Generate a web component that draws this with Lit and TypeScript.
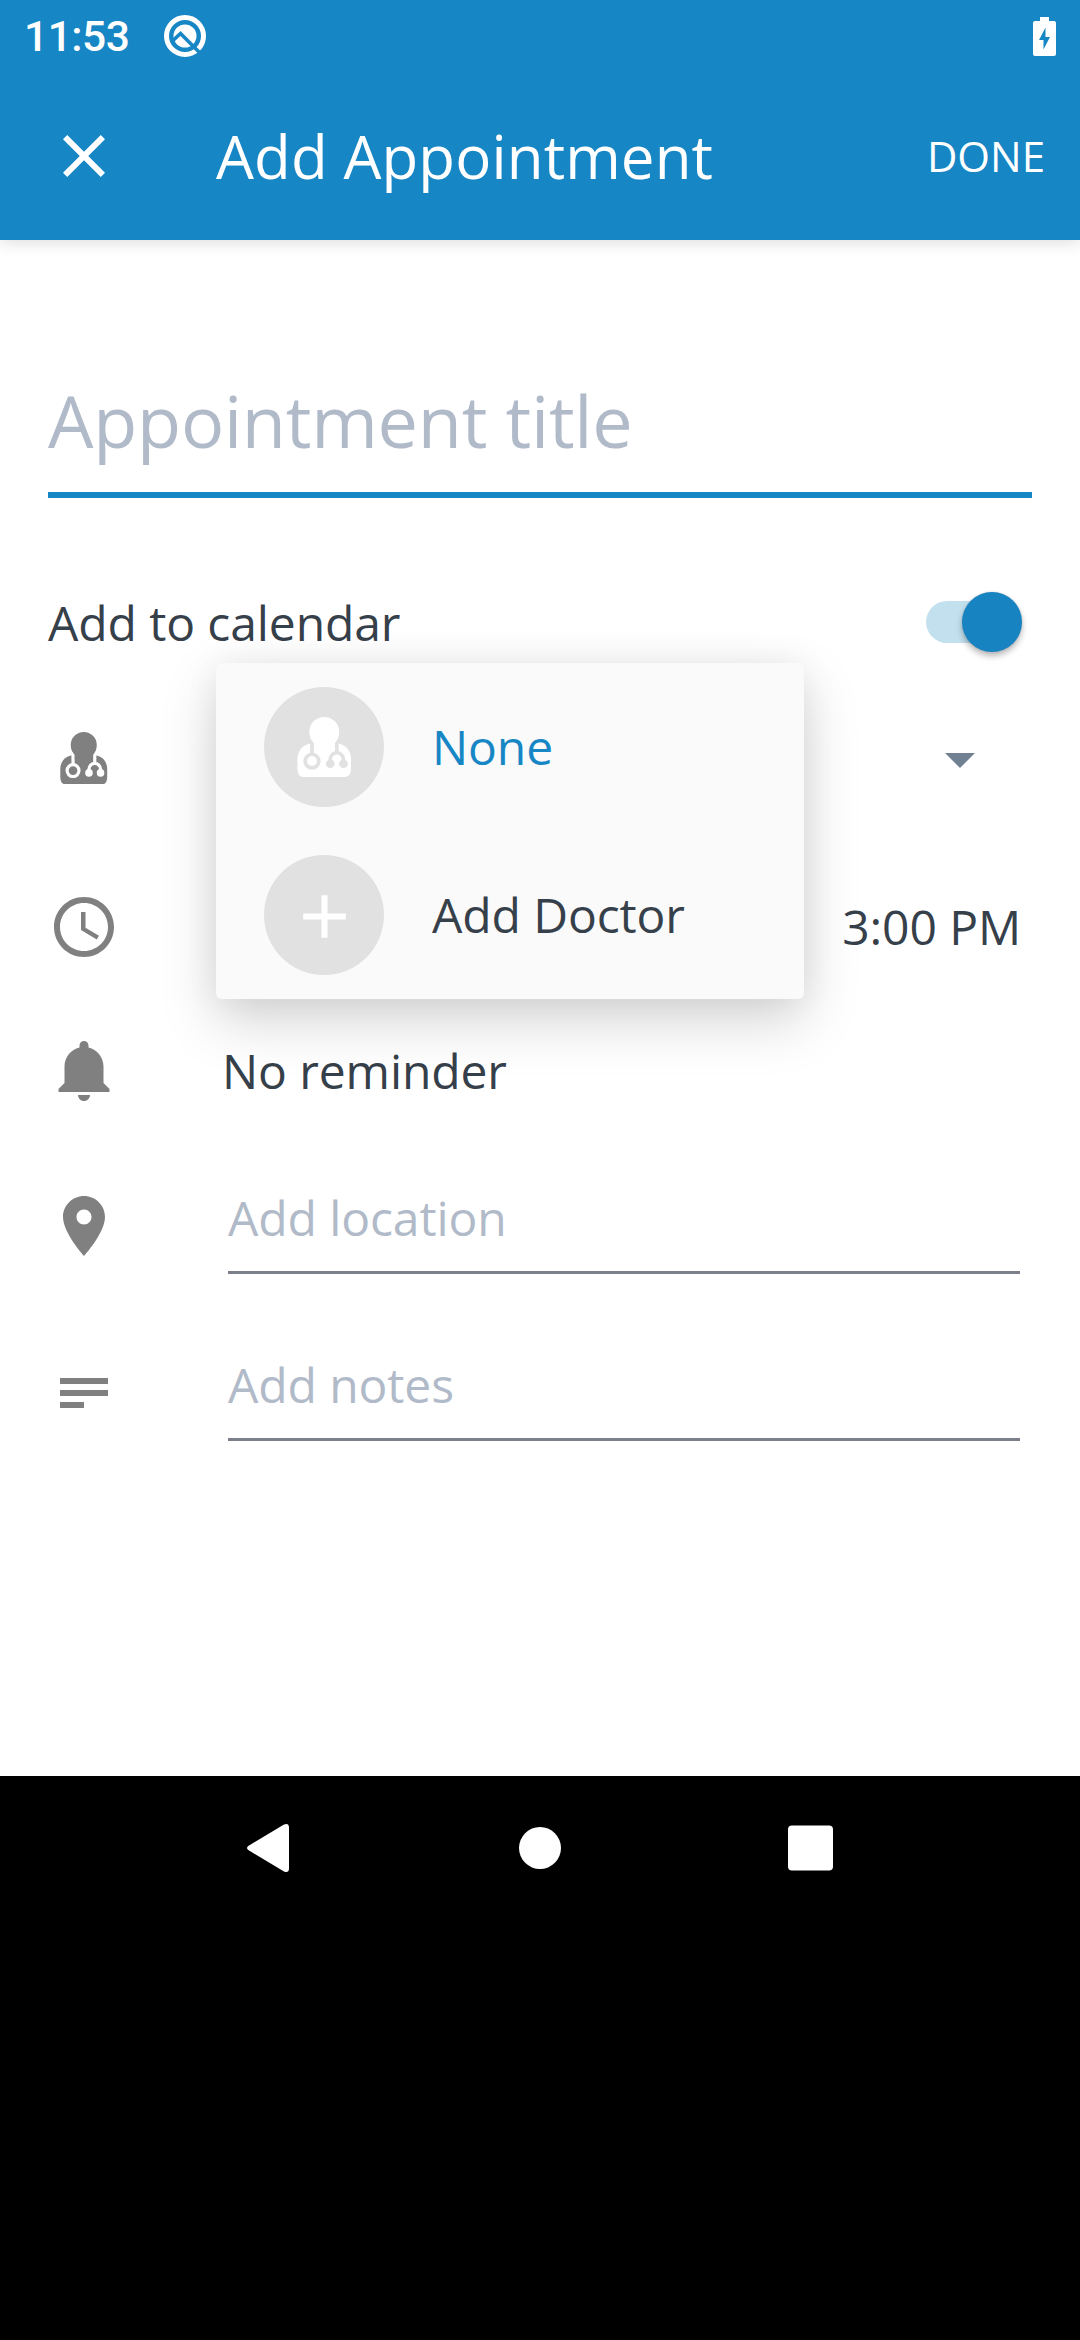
import { LitElement, html, css, svg } from "lit";
import { customElement, property } from "lit/decorators.js";

const icons = {
  clock: svg`<path d="M11.99 2C6.47 2 2 6.48 2 12s4.47 10 9.99 10C17.52 22 22 17.52 22 12S17.52 2 11.99 2zM12 20c-4.42 0-8-3.58-8-8s3.58-8 8-8 8 3.58 8 8-3.58 8-8 8zm.5-13H11v6l5.25 3.15.75-1.23-4.5-2.67z"/>`,
  bell: svg`<path d="M11.5 22c1.1 0 2-.9 2-2h-4c0 1.1.9 2 2 2zm6.5-6v-5.5c0-3.07-2.13-5.64-5-6.32V3.500c0-.83-.67-1.500-1.500-1.500S10 2.670 10 3.500v.68c-2.870.68-5 3.250-5 6.320V16l-2 2v1h17v-1l-2-2z" transform="translate(.5 0)"/>`,
  pin: svg`<path d="M12 2C8.13 2 5 5.13 5 9c0 5.25 7 13 7 13s7-7.75 7-13c0-3.87-3.13-7-7-7zm0 9.500c-1.380 0-2.500-1.120-2.500-2.500s1.120-2.500 2.500-2.500 2.500 1.120 2.500 2.500-1.120 2.500-2.500 2.500z"/>`,
  notes: svg`<path d="M4 7h16v2H4zM4 11h16v2H4zM4 15h8v2H4z"/>`,
  arrow: svg`<path d="M7 10l5 5 5-5z"/>`,
  close: svg`<path d="M19 6.410L17.590 5 12 10.590 6.410 5 5 6.410 10.590 12 5 17.590 6.410 19 12 13.410 17.590 19 19 17.590 13.410 12z"/>`,
  plus: svg`<path d="M19 13h-6v6h-2v-6H5v-2h6V5h2v6h6v2z"/>`,
};

@customElement("app-icon")
class AppIcon extends LitElement {
  @property() name: keyof typeof icons = "clock";
  static styles = css`
    :host { display: block; flex: none; width: 72px; height: 72px; }
    svg { display: block; width: 100%; height: 100%; fill: currentColor; }
  `;
  render() {
    return html`<svg viewBox="0 0 24 24">${icons[this.name]}</svg>`;
  }
}

@customElement("doctor-icon")
class DoctorIcon extends LitElement {
  static styles = css`
    :host { display: block; flex: none; }
    svg { display: block; width: 100%; height: 100%; }
    .body { fill: currentColor; }
    .cut { fill: none; stroke: var(--cut); stroke-width: 11; }
    .dot { fill: var(--cut); }
  `;
  render() {
    return html`<svg viewBox="140 110 164 181">
      <path class="body" d="M177 191C153 197 141 215 141 240V265Q142 290 158 291H286Q302 290 303 265V240C303 215 291 197 267 191Z"/>
      <path class="cut" d="M185 186V220M260 186V215M240 250V238a20 20 0 0 1 40 0v12"/>
      <circle class="cut" cx="185" cy="243" r="20.500"/>
      <circle class="dot" cx="240" cy="251" r="13"/>
      <circle class="dot" cx="280" cy="251" r="13"/>
      <circle class="body" cx="222" cy="155" r="45"/>
      <path class="body" d="M179 170L191 190V205H254V190L265 170Z"/>
    </svg>`;
  }
}

@customElement("app-root")
class AppRoot extends LitElement {
  static styles = css`
    :host {
      display: flex; flex-direction: column; position: relative;
      width: 1080px; height: 2340px; overflow: hidden; background: #000;
      font-family: "Open Sans", "Noto Sans", sans-serif; font-size: 48px; letter-spacing: -.1px; color: #36404a;
    }
    .top { height: 240px; background: #1786c5; color: #fff; box-shadow: 0 3px 14px rgba(0,0,0,.13); z-index: 1; }
    .status { height: 72px; display: flex; align-items: center; box-sizing: border-box; padding: 0 24px; font: 500 42.500px/72px Roboto, sans-serif; letter-spacing: -.5px; }
    .time { padding-top: 2px; width: 140px; }
    .q { width: 42px; height: 42px; }
    .battery { width: 23px; height: 39px; margin-left: auto; }
    .bar { height: 168px; display: flex; align-items: center; box-sizing: border-box; padding: 0 35px 0 48px; }
    .title { font-size: 60px; letter-spacing: .13px; margin-left: 96px; flex: 1; }
    .done { font-size: 42px; letter-spacing: 0; padding-bottom: 2px; }
    .screen { height: 1536px; background: #fff; box-sizing: border-box; padding: 108px 48px 0; }
    .name { height: 144px; line-height: 144px; border-bottom: 6px solid #1786c5; font-size: 72px; letter-spacing: -.25px; color: #b0bac8; }
    .row { display: flex; align-items: center; justify-content: space-between; height: 72px; }
    .calendar { margin-top: 88px; }
    .doctor { margin-top: 65px; }
    .when { margin-top: 96px; }
    .remind { margin-top: 72px; justify-content: flex-start; }
    .remind-text { margin-left: 102px; padding-bottom: 2px; }
    .gray { color: #808080; }
    .doc-small { --cut: #fff; width: 47.500px; height: 52.500px; margin: 0 0 2px 12px; }
    .chevron { color: #718092; margin-right: 36px; }
    .hour { margin-right: 11px; padding-bottom: 2px; }
    .entry { display: flex; height: 84px; margin-top: 83px; }
    .field { box-sizing: border-box; width: 792px; margin-left: 108px; border-bottom: 3px solid #7b808a; line-height: 56px; color: #b0bac8; }
    .switch { width: 96px; height: 60px; margin-right: 10px; display: grid; align-items: center; }
    .track { grid-area: 1/1; width: 88px; height: 42px; border-radius: 21px; background: #c3e0ef; }
    .thumb { grid-area: 1/1; justify-self: end; width: 60px; height: 60px; border-radius: 50%; background: #1783c1; box-shadow: 0 4px 6px rgba(0,0,0,.28), 0 0 2px rgba(0,0,0,.15); }
    .menu {
      position: absolute; left: 216px; top: 663px; width: 588px; height: 336px; border-radius: 6px; z-index: 2;
      background: #fafafa; box-shadow: 0 22px 56px rgba(0,0,0,.17), 0 0 36px rgba(0,0,0,.06);
    }
    .item { display: flex; align-items: center; gap: 48px; height: 168px; padding-left: 48px; }
    .label { padding-bottom: 2px; }
    .avatar { display: flex; align-items: center; justify-content: center; width: 120px; height: 120px; border-radius: 50%; background: #e1e1e1; color: #fff; }
    .doc-large { --cut: #e1e1e1; width: 54.500px; height: 60px; }
    .plus { width: 73px; height: 73px; margin-top: 3px; }
    .active { color: #1786c5; }
    .nav { height: 144px; display: flex; align-items: center; justify-content: center; gap: 224px; }
    .nav svg { width: 48px; height: 54px; fill: #fff; flex: none; }
  `;
  render() {
    return html`
      <header class="top">
        <div class="status">
          <span class="time">11:53</span>
          <svg class="q" viewBox="0 0 42 42">
            <circle cx="21" cy="21" r="18.500" fill="none" stroke="#fff" stroke-width="5"/>
            <circle cx="21" cy="21" r="11.500" fill="#fff"/>
            <path d="M9 25.500L16.500 18.500L37.500 39.500" fill="none" stroke="#1786c5" stroke-width="3.600"/>
          </svg>
          <svg class="battery" viewBox="0 0 23 39">
            <path fill="#fff" d="M7 0h9v4h5q2 0 2 2v31q0 2-2 2H2q-2 0-2-2V6q0-2 2-2h5z"/>
            <path fill="#1786c5" d="M12.500 10.500L6 23h4.500v9.500L17 20h-4.500z"/>
          </svg>
        </div>
        <div class="bar">
          <app-icon name="close"></app-icon>
          <span class="title">Add Appointment</span>
          <span class="done">DONE</span>
        </div>
      </header>
      <main class="screen">
        <div class="name">Appointment title</div>
        <div class="row calendar">
          <span>Add to calendar</span>
          <div class="switch"><div class="track"></div><div class="thumb"></div></div>
        </div>
        <div class="row doctor">
          <doctor-icon class="gray doc-small"></doctor-icon>
          <app-icon class="chevron" name="arrow"></app-icon>
        </div>
        <div class="row when">
          <app-icon class="gray" name="clock"></app-icon>
          <span class="hour">3:00 PM</span>
        </div>
        <div class="row remind">
          <app-icon class="gray" name="bell"></app-icon>
          <span class="remind-text">No reminder</span>
        </div>
        <div class="entry">
          <app-icon class="gray" name="pin"></app-icon>
          <div class="field">Add location</div>
        </div>
        <div class="entry">
          <app-icon class="gray" name="notes"></app-icon>
          <div class="field">Add notes</div>
        </div>
      </main>
      <div class="menu">
        <div class="item active">
          <div class="avatar"><doctor-icon class="doc-large"></doctor-icon></div>
          <span class="label">None</span>
        </div>
        <div class="item">
          <div class="avatar"><app-icon class="plus" name="plus"></app-icon></div>
          <span class="label">Add Doctor</span>
        </div>
      </div>
      <nav class="nav">
        <svg viewBox="0 0 48 54"><path d="M5 24.500L40 3.600Q44.500 1.500 45 6V48Q44.500 52.500 40 50.400L5 29.500Q1 27 5 24.500Z"/></svg>
        <svg viewBox="0 0 48 54"><circle cx="24" cy="27" r="21"/></svg>
        <svg viewBox="0 0 48 54"><rect x="0" y="4.500" width="45" height="45" rx="4"/></svg>
      </nav>
    `;
  }
}
